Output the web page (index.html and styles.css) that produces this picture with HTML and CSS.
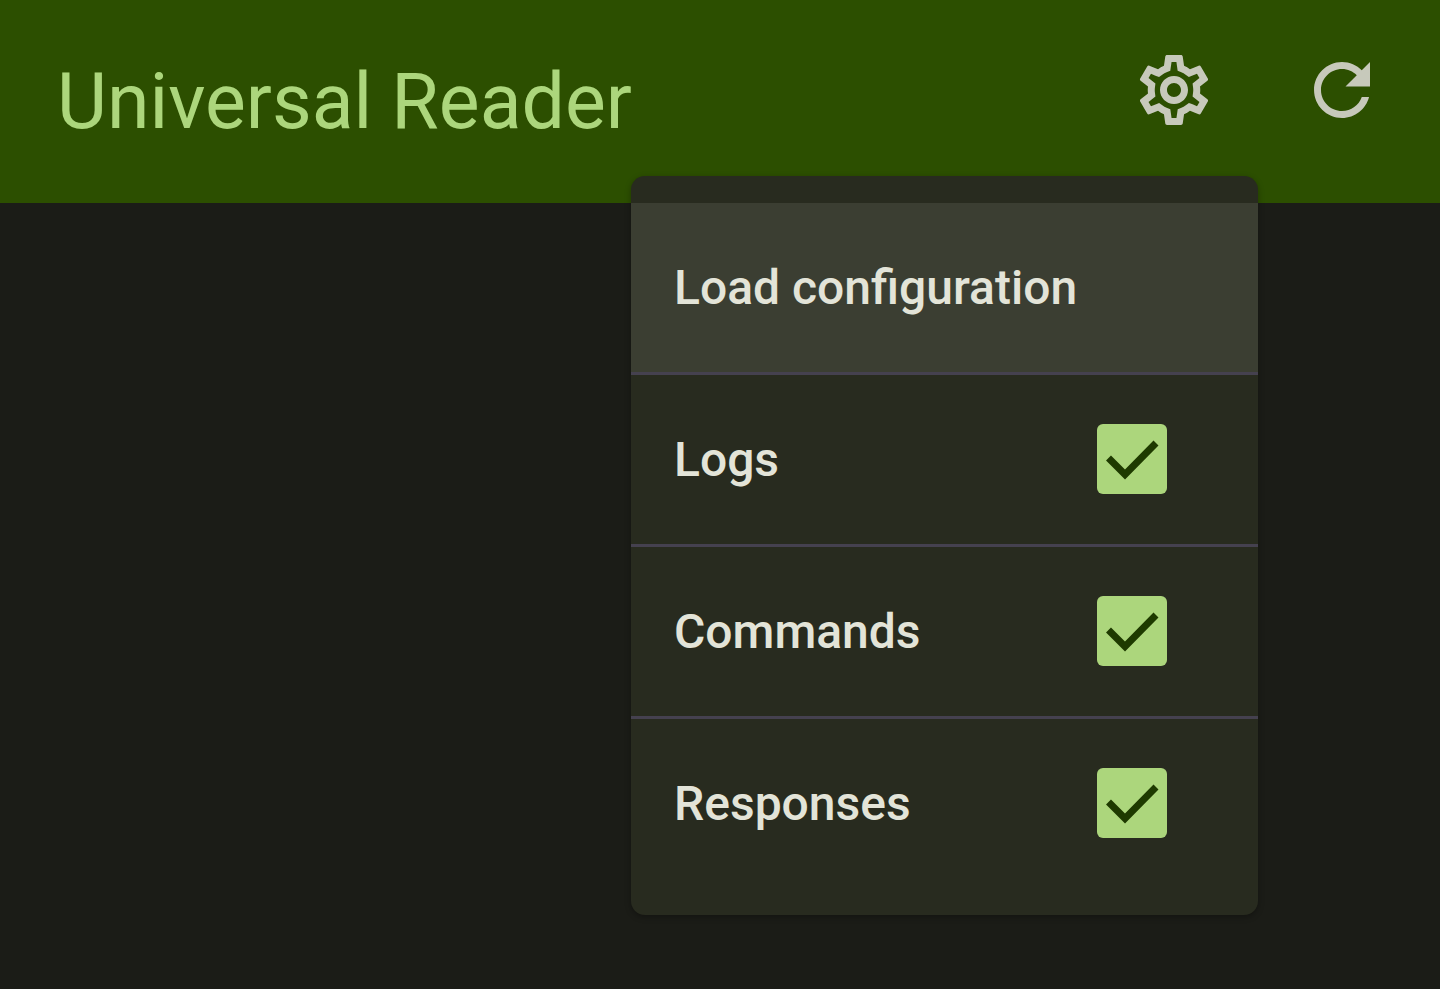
FILE: index.html
```html
<!DOCTYPE html>
<html lang="en">
<head>
    <meta charset="UTF-8">
    <meta name="viewport" content="width=device-width, initial-scale=1.0">
    <title>Universal Reader</title>
    <link rel="stylesheet" href="styles.css">
</head>
<body>

    <header class="app-bar">
        <h1 class="app-title">Universal Reader</h1>
        <div class="app-actions">
            <button class="icon-btn" aria-label="Settings">
                <svg viewBox="0 0 24 24" width="84" height="84"><path d="M19.43 12.98c.04-.32.07-.64.07-.98 0-.34-.03-.66-.07-.98l2.11-1.65c.19-.15.24-.42.12-.64l-2-3.46c-.09-.16-.26-.25-.44-.25-.06 0-.12.01-.17.03l-2.49 1c-.52-.4-1.08-.73-1.69-.98l-.38-2.65C14.46 2.18 14.25 2 14 2h-4c-.25 0-.46.18-.49.42l-.38 2.65c-.61.25-1.17.59-1.69.98l-2.49-1c-.06-.02-.12-.03-.18-.03-.17 0-.34.09-.43.25l-2 3.46c-.13.22-.07.49.12.64l2.11 1.65c-.04.32-.07.65-.07.98 0 .33.03.66.07.98l-2.11 1.65c-.19.15-.24.42-.12.64l2 3.46c.09.16.26.25.44.25.06 0 .12-.01.17-.03l2.49-1c.52.4 1.08.73 1.69.98l.38 2.65c.03.24.24.42.49.42h4c.25 0 .46-.18.49-.42l.38-2.65c.61-.25 1.17-.59 1.69-.98l2.49 1c.06.02.12.03.18.03.17 0 .34-.09.43-.25l2-3.46c.12-.22.07-.49-.12-.64l-2.11-1.65zm-1.98-1.71c.04.31.05.52.05.73 0 .21-.02.43-.05.73l-.14 1.13.89.7 1.08.84-.7 1.21-1.27-.51-1.04-.42-.9.68c-.43.32-.84.56-1.25.73l-1.06.43-.16 1.13-.2 1.35h-1.4l-.19-1.35-.16-1.13-1.06-.43c-.43-.18-.83-.41-1.23-.71l-.91-.7-1.06.43-1.27.51-.7-1.21 1.08-.84.89-.7-.14-1.13c-.03-.31-.05-.54-.05-.74s.02-.43.05-.73l.14-1.13-.89-.7-1.08-.84.7-1.21 1.27.51 1.04.42.9-.68c.43-.32.84-.56 1.25-.73l1.06-.43.16-1.13.2-1.35h1.39l.19 1.35.16 1.13 1.06.43c.43.18.83.41 1.23.71l.91.7 1.06-.43 1.27-.51.7 1.21-1.07.85-.89.7.14 1.13zM12 8c-2.21 0-4 1.79-4 4s1.79 4 4 4 4-1.79 4-4-1.79-4-4-4zm0 6c-1.1 0-2-.9-2-2s.9-2 2-2 2 .9 2 2-.9 2-2 2z"/></svg>
            </button>
            <button class="icon-btn" aria-label="Refresh">
                <svg viewBox="0 0 24 24" width="84" height="84"><path d="M17.65 6.35C16.2 4.9 14.21 4 12 4c-4.42 0-7.99 3.58-7.99 8s3.57 8 7.99 8c3.73 0 6.84-2.55 7.73-6h-2.08c-.82 2.33-3.04 4-5.65 4-3.31 0-6-2.69-6-6s2.69-6 6-6c1.66 0 3.14.69 4.22 1.78L13 11h7V4l-2.35 2.35z"/></svg>
            </button>
        </div>
    </header>

    <div class="menu">
        <div class="menu-item active">
            <span class="menu-label">Load configuration</span>
        </div>
        <div class="menu-item">
            <span class="menu-label">Logs</span>
            <span class="checkbox">
                <svg viewBox="0 0 70 70" width="70" height="70"><path d="M11.5 34 28 50.5 59 19"/></svg>
            </span>
        </div>
        <div class="menu-item">
            <span class="menu-label">Commands</span>
            <span class="checkbox">
                <svg viewBox="0 0 70 70" width="70" height="70"><path d="M11.5 34 28 50.5 59 19"/></svg>
            </span>
        </div>
        <div class="menu-item">
            <span class="menu-label">Responses</span>
            <span class="checkbox">
                <svg viewBox="0 0 70 70" width="70" height="70"><path d="M11.5 34 28 50.5 59 19"/></svg>
            </span>
        </div>
    </div>

</body>
</html>
```

FILE: styles.css
```css
html, body {
    height: 100%;
}
body {
    margin: 0;
    background-color: #1b1c17;
    font-family: Roboto, "Liberation Sans", sans-serif;
    overflow: hidden;
}
.app-bar {
    display: flex;
    align-items: center;
    justify-content: space-between;
    height: 203px;
    padding: 0 14px 0 57px;
    box-sizing: border-box;
    background-color: #2c4f00;
}
.app-title {
    margin: 0;
    font-size: 77px;
    font-weight: 400;
    color: #acd67c;
}
.app-actions {
    display: flex;
    align-items: center;
}
.icon-btn {
    display: flex;
    align-items: center;
    justify-content: center;
    width: 168px;
    height: 84px;
    margin-top: -23px;
    padding: 0;
    border: none;
    background: none;
}
.icon-btn svg {
    fill: #c7c9bb;
}
.menu {
    position: absolute;
    top: 176px;
    left: 631px;
    width: 627px;
    padding: 27px 0;
    border-radius: 14px;
    background-color: #282b1f;
    box-shadow: 0 2px 6px rgba(0, 0, 0, 0.3);
}
.menu-item {
    display: flex;
    align-items: center;
    justify-content: space-between;
    height: 169px;
    padding: 0 91px 0 43px;
    border-top: 3px solid #45414f;
}
.menu-item:first-child {
    border-top: none;
}
.menu-item.active {
    background-color: #3b3e32;
}
.menu-label {
    font-size: 48px;
    font-weight: 500;
    color: #e3e4d8;
}
.checkbox {
    display: block;
    width: 70px;
    height: 70px;
    margin-top: -1px;
    border-radius: 6px;
    background-color: #acd67c;
}
.checkbox svg {
    display: block;
    fill: none;
    stroke: #1e3a00;
    stroke-width: 7;
}
```
